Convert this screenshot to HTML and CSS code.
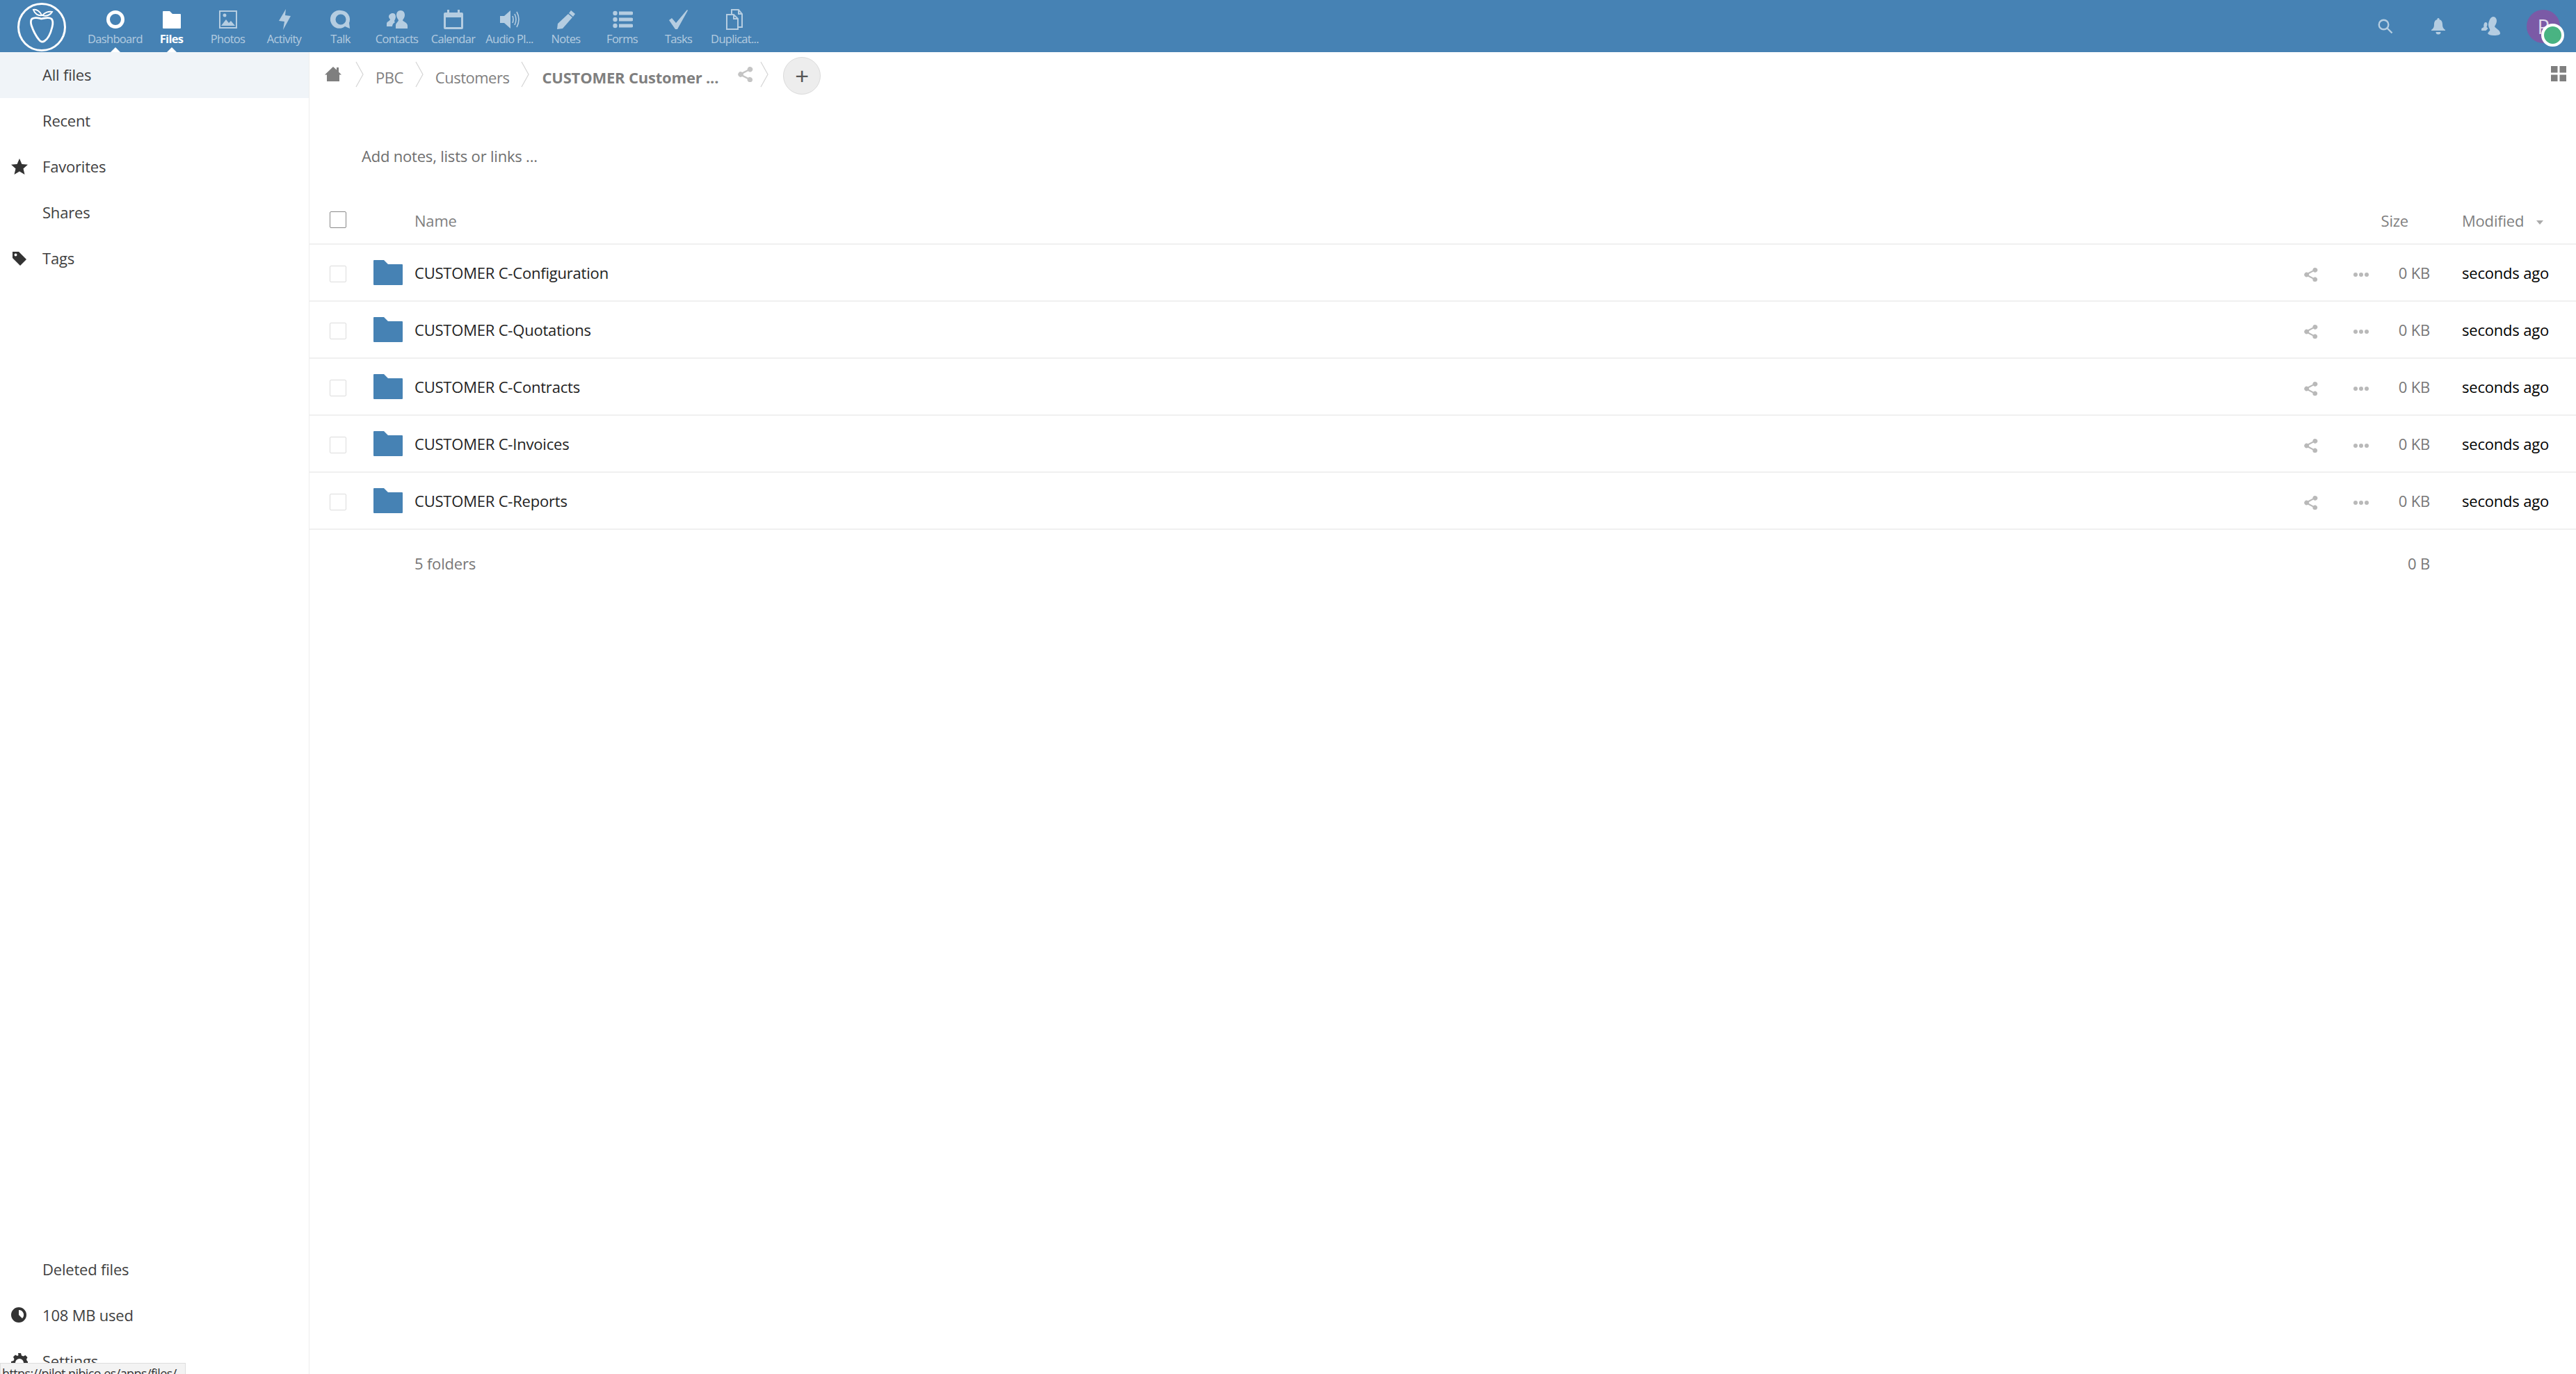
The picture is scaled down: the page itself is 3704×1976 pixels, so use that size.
FILE: index.html
```html
<!DOCTYPE html>
<html lang="en">
<head>
  <meta charset="UTF-8" />
  <title>Files</title>
  <link rel="stylesheet" href="styles.css">
</head>
<body>
  <svg class="defs" width="0" height="0">
    <symbol id="i-share" viewBox="0 0 20 20"><path d="M16 0a3.4 3.4 0 1 1-2.6 5.6L7 9a3.4 3.4 0 0 1 0 2l6.400 3.400a3.400 3.400 0 1 1-1 1.800L5.600 12.800a3.400 3.400 0 1 1 0-5.600l6.800-3.400A3.400 3.400 0 0 1 16 0z"/></symbol>
    <symbol id="i-folder" viewBox="0 0 42 36"><path d="M1 0h14l6 6h20a1 1 0 0 1 1 1v28a1 1 0 0 1-1 1H1a1 1 0 0 1-1-1V1a1 1 0 0 1 1-1z"/></symbol>
    <symbol id="i-chevron" viewBox="0 0 12 38"><path d="M1 1l10 18L1 37" fill="none" stroke="#d4d4d4" stroke-width="1.200"/></symbol>
  </svg>

  <header class="topbar">
    <a class="logo">
      <svg width="72" height="72" viewBox="0 0 72 72" fill="none" stroke="#fff">
        <circle cx="36" cy="36" r="33.500" stroke-width="3"/>
        <path d="M22 24c5-3 9-1 14 0 5-1 10-3 14 0 3 3 2 8 1 12-2 8-6 17-11 20-3 2-6 1-8-2-5-6-9-15-11-21-1-4-1-7 1-9z" stroke-width="2.800"/>
        <path d="M24 11c5-1 10 3 12 8-5 1-10-2-12-8zM37 19c3-4 9-6 14-5-2 4-8 7-14 5z" stroke-width="2"/>
      </svg>
    </a>
    <nav class="apps">
      <a class="app is-current">
        <svg width="30" height="30" viewBox="0 0 30 30"><circle class="line white" cx="15" cy="15" r="10.500" stroke-width="5"/></svg>
        <span>Dashboard</span>
      </a>
      <a class="app is-active">
        <svg width="30" height="30" viewBox="0 0 30 30"><path class="white-fill" d="M3 3h9l4 4h11a1 1 0 0 1 1 1v19a1 1 0 0 1-1 1H3a1 1 0 0 1-1-1V4a1 1 0 0 1 1-1z"/></svg>
        <span>Files</span>
      </a>
      <a class="app">
        <svg width="30" height="30" viewBox="0 0 30 30"><path fill-rule="evenodd" d="M2 2h26v26H2zM4 4v22h22V4zM5 24l7-9 4 5 3-3 6 7zM10 6.500a2.500 2.500 0 1 1 0 5 2.500 2.500 0 0 1 0-5z"/></svg>
        <span>Photos</span>
      </a>
      <a class="app">
        <svg width="30" height="30" viewBox="0 0 30 30"><path d="M17 0L7 17l8 1-2 12 11-20-8-1z"/></svg>
        <span>Activity</span>
      </a>
      <a class="app">
        <svg width="30" height="30" viewBox="0 0 30 30"><path fill-rule="evenodd" d="M15 2a13 13 0 0 1 12 18l1 8-7-3A13 13 0 1 1 15 2zm0 5.500a7.500 7.500 0 1 0 0 15 7.500 7.500 0 0 0 0-15z"/></svg>
        <span>Talk</span>
      </a>
      <a class="app">
        <svg width="30" height="30" viewBox="0 0 30 30"><path d="M20 2c4 0 6 3 6 7 0 3-2 5-3 7 0 2 7 3 7 8v4H13v-5c0-3 4-5 4-7-1-2-3-4-3-7 0-4 2-7 6-7zM9 6c3 0 4 3 4 5 0 2-1 4-2 6 0 1 1 2 1 2-2 1-4 3-4 6H0v-4c0-3 5-4 5-6-1-1-2-3-2-4 0-3 3-5 6-5z"/></svg>
        <span>Contacts</span>
      </a>
      <a class="app">
        <svg width="30" height="30" viewBox="0 0 30 30"><path fill-rule="evenodd" d="M6 1h3v4h12V1h3v4h3a2 2 0 0 1 2 2v20a2 2 0 0 1-2 2H3a2 2 0 0 1-2-2V7a2 2 0 0 1 2-2h3zM4 12v14h22V12z"/></svg>
        <span>Calendar</span>
      </a>
      <a class="app">
        <svg width="30" height="30" viewBox="0 0 30 30"><path d="M1 10h6l9-8v26l-9-8H1z"/><path class="line" d="M19 10q2 5 0 10M22 7q4 8 0 16M25 4q6 11 0 22" stroke-width="1.600"/></svg>
        <span>Audio Pl...</span>
      </a>
      <a class="app">
        <svg width="30" height="30" viewBox="0 0 30 30"><path d="M22 2l6 5-3 4-6-5zM18 7l6 5-14 16-8 1 1-8z"/></svg>
        <span>Notes</span>
      </a>
      <a class="app">
        <svg width="30" height="30" viewBox="0 0 30 30"><circle cx="4.500" cy="6" r="3.200"/><circle cx="4.500" cy="15" r="3.200"/><circle cx="4.500" cy="24" r="3.200"/><path d="M10 3.500h18a1 1 0 0 1 0 5H10zM10 12.500h18a1 1 0 0 1 0 5H10zM10 21.500h18a1 1 0 0 1 0 5H10z"/></svg>
        <span>Forms</span>
      </a>
      <a class="app">
        <svg width="30" height="30" viewBox="0 0 30 30"><path d="M1 16l4-3 6 7L27 1l1 1-15 27h-3z"/></svg>
        <span>Tasks</span>
      </a>
      <a class="app">
        <svg width="30" height="30" viewBox="0 0 30 30"><path class="line" stroke-width="2" d="M10 8V1h10l5 6v19h-6M3 8h10l6 6v15H3zM13 8v6h6M20 1v6h5"/></svg>
        <span>Duplicat...</span>
      </a>
    </nav>
    <div class="top-right">
      <svg class="top-search" width="22" height="22" viewBox="0 0 22 22" fill="none" stroke="#b5cde1" stroke-width="2.400"><circle cx="8.500" cy="8.500" r="6.800"/><path d="M13.500 13.500l7 7"/></svg>
      <svg class="top-bell" width="20" height="24" viewBox="0 0 20 24" fill="#b5cde1"><path d="M10 0a1.500 1.500 0 0 1 1.500 2c3.500 1 4.500 4 4.500 7 0 4 1 6 4 8v1H0v-1c3-2 4-4 4-8 0-3 1-6 4.500-7A1.500 1.500 0 0 1 10 0zM6.500 20h7a3.500 3.500 0 0 1-7 0z"/></svg>
      <svg class="top-contacts" width="27" height="27" viewBox="0 0 27 27" fill="#b5cde1"><path d="M17 0c3 0 5 3 5 6 0 3-2 6-3 8 0 2 8 5 8 10 0 2-3 3-9 3-5 0-8-1-9-3l2-3c2-1 1-2 1-3-1-2-2-4-2-6 0-3 2-12 7-12zM6 8a2.500 3 0 0 1 2.500 3c0 2-1 2.500-1 4l2 2-3 3H0v-2c0-2 3-2 3.500-3.500C3 13 3.500 8 6 8z"/></svg>
      <div class="avatar">P<span class="status"></span></div>
    </div>
  </header>

  <div class="layout">
    <aside class="sidebar">
      <ul class="side-list">
        <li class="side-item is-active">All files</li>
        <li class="side-item">Recent</li>
        <li class="side-item">
          <svg class="side-icon" width="24" height="24" viewBox="0 0 24 24"><path d="M12 0l3.400 8 8.600.8-6.500 5.700 2 8.500L12 18.500 4.500 23l2-8.500L0 8.800 8.600 8z"/></svg>
          Favorites
        </li>
        <li class="side-item">Shares</li>
        <li class="side-item">
          <svg class="side-icon" width="24" height="24" viewBox="0 0 24 24"><path fill-rule="evenodd" d="M2 2h9l11 11-9 9L2 11zM6.500 4.500a2 2 0 1 0 0 4 2 2 0 0 0 0-4z"/></svg>
          Tags
        </li>
      </ul>
      <ul class="side-list side-bottom">
        <li class="side-item">Deleted files</li>
        <li class="side-item">
          <svg class="side-icon" width="22" height="22" viewBox="0 0 22 22"><path fill-rule="evenodd" d="M11 0a11 11 0 1 1 0 22 11 11 0 0 1 0-22zm0 4v7l5 5a7 7 0 0 0-5-12z"/></svg>
          108 MB used
        </li>
        <li class="side-item">
          <svg class="side-icon" width="24" height="24" viewBox="0 0 24 24"><path fill-rule="evenodd" d="M10 0h4l1 3.500 2.500 1 3-1.500 3 3-1.500 3 1 2.500L24 12v4l-3.500 1-1 2.500 1.500 3-3 1.500H3l-1.500-1.500 1.500-3-1-2.500L0 16v-4l3.500-1 1-2.500-1.500-3 3-3 3 1.500 1.500-1zM12 8a6 6 0 1 0 0 12 6 6 0 0 0 0-12z"/></svg>
          Settings
        </li>
      </ul>
    </aside>

    <main class="content">
      <div class="crumbs">
        <svg class="crumb-home" width="24" height="22" viewBox="0 0 24 22"><path d="M12 0l5 4.500V1h3v6.500l4 4h-3V21H3v-9.500H0z"/></svg>
        <svg class="chevron" width="12" height="38"><use href="#i-chevron"/></svg>
        <span class="crumb">PBC</span>
        <svg class="chevron" width="12" height="38"><use href="#i-chevron"/></svg>
        <span class="crumb">Customers</span>
        <svg class="chevron" width="12" height="38"><use href="#i-chevron"/></svg>
        <span class="crumb crumb-current">CUSTOMER Customer ...</span>
        <svg class="crumb-share" width="22" height="22"><use href="#i-share"/></svg>
        <svg class="chevron" width="12" height="38"><use href="#i-chevron"/></svg>
        <button class="add-btn">+</button>
        <svg class="view-toggle" width="22" height="22" viewBox="0 0 22 22"><path d="M0 0h9.500v9.500H0zM12.500 0H22v9.500h-9.500zM0 12.500h9.500V22H0zM12.500 12.500H22V22h-9.500z"/></svg>
      </div>

      <div class="notes">Add notes, lists or links ...</div>

      <div class="files">
        <div class="row row-head">
          <span class="check check-head"></span>
          <span class="col-name">Name</span>
          <span class="col-size">Size</span>
          <span class="col-date">Modified <i class="sort-arrow"></i></span>
        </div>

        <div class="row">
          <span class="check"></span>
          <svg class="folder" width="42" height="36"><use href="#i-folder"/></svg>
          <span class="name">CUSTOMER C-Configuration</span>
          <svg class="share" width="20" height="20"><use href="#i-share"/></svg>
          <span class="more"><b></b><b></b><b></b></span>
          <span class="size">0 KB</span>
          <span class="date">seconds ago</span>
        </div>
        <div class="row">
          <span class="check"></span>
          <svg class="folder" width="42" height="36"><use href="#i-folder"/></svg>
          <span class="name">CUSTOMER C-Quotations</span>
          <svg class="share" width="20" height="20"><use href="#i-share"/></svg>
          <span class="more"><b></b><b></b><b></b></span>
          <span class="size">0 KB</span>
          <span class="date">seconds ago</span>
        </div>
        <div class="row">
          <span class="check"></span>
          <svg class="folder" width="42" height="36"><use href="#i-folder"/></svg>
          <span class="name">CUSTOMER C-Contracts</span>
          <svg class="share" width="20" height="20"><use href="#i-share"/></svg>
          <span class="more"><b></b><b></b><b></b></span>
          <span class="size">0 KB</span>
          <span class="date">seconds ago</span>
        </div>
        <div class="row">
          <span class="check"></span>
          <svg class="folder" width="42" height="36"><use href="#i-folder"/></svg>
          <span class="name">CUSTOMER C-Invoices</span>
          <svg class="share" width="20" height="20"><use href="#i-share"/></svg>
          <span class="more"><b></b><b></b><b></b></span>
          <span class="size">0 KB</span>
          <span class="date">seconds ago</span>
        </div>
        <div class="row">
          <span class="check"></span>
          <svg class="folder" width="42" height="36"><use href="#i-folder"/></svg>
          <span class="name">CUSTOMER C-Reports</span>
          <svg class="share" width="20" height="20"><use href="#i-share"/></svg>
          <span class="more"><b></b><b></b><b></b></span>
          <span class="size">0 KB</span>
          <span class="date">seconds ago</span>
        </div>

        <div class="row row-summary">
          <span class="summary-name">5 folders</span>
          <span class="summary-size">0 B</span>
        </div>
      </div>
    </main>
  </div>

  <div class="status-link">https://pilot.nibico.es/apps/files/</div>
</body>
</html>
```

FILE: styles.css
```css
* {
  box-sizing: border-box;
}

html, body {
  height: 100%;
  margin: 0;
  overflow: hidden;
}

body {
  background: #fff;
  color: #222;
  font-family: "Open Sans", "Noto Sans", sans-serif;
  font-size: 22px;
  letter-spacing: -0.2px;
}

.defs {
  position: absolute;
}

/* top bar */
.topbar {
  display: flex;
  align-items: stretch;
  height: 75px;
  background: #4682b4;
}

.logo {
  display: flex;
  align-items: center;
  width: 125px;
  padding: 2px 0 0 24px;
}

.apps {
  display: flex;
}

.app {
  position: relative;
  display: flex;
  flex-direction: column;
  align-items: center;
  width: 81px;
  padding-top: 13px;
  color: rgba(255, 255, 255, 0.6);
  font-size: 16.500px;
  line-height: 20px;
  white-space: nowrap;
  letter-spacing: -0.7px;
}

.app svg {
  fill: #b5cde1;
  flex: none;
}

.app svg .line {
  fill: none;
  stroke: #b5cde1;
}

.app svg .line.white {
  stroke: #fff;
}

.app svg .white-fill {
  fill: #fff;
}

.app span {
  margin-top: 3px;
}

.app.is-active {
  color: #fff;
  font-weight: 700;
}

.app.is-active::after,
.app.is-current::after {
  content: "";
  position: absolute;
  bottom: 0;
  left: 50%;
  margin-left: -7px;
  border: 7px solid transparent;
  border-top: 0;
  border-bottom-color: #fff;
}

.top-right {
  display: flex;
  align-items: center;
  margin-left: auto;
}

.top-search {
  margin-right: 55px;
}

.top-bell {
  margin-right: 52px;
}

.top-contacts {
  margin-right: 38px;
}

.avatar {
  position: relative;
  width: 48px;
  height: 48px;
  margin-right: 23px;
  border-radius: 50%;
  background: #7b5aa6;
  color: #e3dced;
  font-size: 29px;
  line-height: 48px;
  text-align: center;
}

.status {
  position: absolute;
  right: -6px;
  bottom: -5px;
  width: 33px;
  height: 33px;
  border: 4px solid #fff;
  border-radius: 50%;
  background: #49b382;
}

/* sidebar + content */
.layout {
  display: flex;
  height: calc(100% - 75px);
}

.sidebar {
  display: flex;
  flex-direction: column;
  justify-content: space-between;
  width: 445px;
  flex: none;
  border-right: 1px solid #ededed;
  color: #3f3f3f;
}

.side-list {
  margin: 0;
  padding: 0;
  list-style: none;
}

.side-bottom {
  margin-bottom: -15px;
}

.side-item {
  position: relative;
  height: 66px;
  padding-left: 61px;
  line-height: 65px;
}

.side-item.is-active {
  background: #f0f4f8;
}

.side-icon {
  position: absolute;
  left: 16px;
  top: 21px;
  fill: #333;
}

.content {
  flex: 1;
  min-width: 0;
}

/* breadcrumb */
.crumbs {
  display: flex;
  align-items: center;
  height: 70px;
  padding: 0 14px 0 22px;
  color: #7f7f7f;
}

.crumb-home {
  fill: #7f7f7f;
  margin-top: -6px;
  margin-right: 20px;
}

.chevron {
  flex: none;
  margin-top: -6px;
}

.crumb {
  margin: 2px 17px 0;
  letter-spacing: -0.5px;
}

.crumb-current {
  margin-left: 18px;
  margin-right: 28px;
  font-weight: 700;
  letter-spacing: -0.2px;
}

.crumb-share {
  fill: #c4c4c4;
  margin-top: -6px;
  margin-right: 10px;
}

.add-btn {
  width: 54px;
  height: 54px;
  margin-left: 21px;
  padding: 0;
  border: 1px solid #dbdbdb;
  border-radius: 50%;
  background: #ededed;
  color: #555;
  font-family: "Liberation Sans", sans-serif;
  font-size: 34px;
  line-height: 48px;
  margin-top: -2px;
}

.view-toggle {
  fill: #7f7f7f;
  margin-left: auto;
  margin-top: -8px;
}

/* notes */
.notes {
  height: 140px;
  padding: 61px 0 0 75px;
  color: #6f6f6f;
  line-height: 36px;
}

/* file list */
.row {
  display: grid;
  grid-template-columns: 92px 59px 1fr 71px 60px 50px 210px;
  align-items: center;
  height: 82px;
  border-bottom: 2px solid #f0f0f0;
}

.row-head {
  height: 67px;
  color: #7f7f7f;
}

.check {
  width: 24px;
  height: 24px;
  margin: 3px 0 0 29px;
  border: 1px solid #dcdcdc;
  border-radius: 2px;
}

.check-head {
  margin-top: -3px;
  border-color: #888;
}

.col-name {
  grid-column: 3;
  margin-top: -2px;
}

.col-size {
  grid-column: 4 / span 3;
  margin-top: -2px;
  padding-right: 31px;
  text-align: right;
}

.col-date {
  margin-top: -2px;
  padding-left: 46px;
}

.sort-arrow {
  display: inline-block;
  margin-left: 12px;
  vertical-align: middle;
  border: 5.500px solid transparent;
  border-top: 6px solid #aaa;
  border-bottom: 0;
}

.folder {
  fill: #4682b4;
}

.share {
  fill: #b9b9b9;
  margin-top: 6px;
}

.more {
  display: flex;
  gap: 2px;
  margin-top: 6px;
}

.more b {
  width: 6px;
  height: 6px;
  border-radius: 50%;
  background: #b9b9b9;
}

.size {
  color: #777;
  text-align: right;
}

.date {
  padding-left: 46px;
  color: #000;
}

.row-summary {
  border-bottom: 0;
  height: 96px;
  color: #777;
}

.summary-name {
  grid-column: 3;
}

.summary-size {
  grid-column: 6;
  text-align: right;
}

/* browser status link */
.status-link {
  position: fixed;
  left: 0;
  bottom: 0;
  width: 267px;
  height: 16px;
  padding: 2px 0 0 2px;
  border: 1px solid #dedede;
  border-bottom: 0;
  background: #f3f3f3;
  color: #333;
  font-size: 18px;
  line-height: 24px;
  letter-spacing: -0.6px;
  white-space: nowrap;
  overflow: hidden;
}
```
